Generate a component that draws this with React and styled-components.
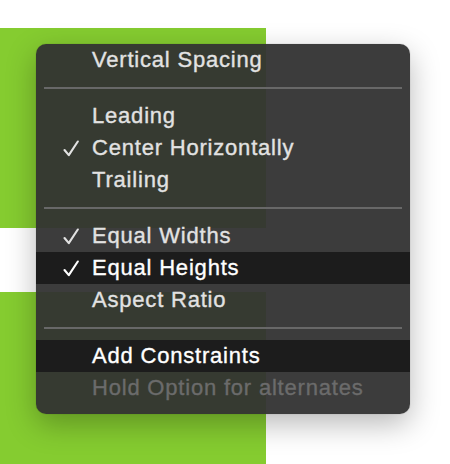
import React from 'react';
import styled, { createGlobalStyle } from 'styled-components';

const Global = createGlobalStyle`
  html, body {
    margin: 0;
    padding: 0;
    background: #fff;
  }
  body {
    font-family: "Liberation Sans", Arial, sans-serif;
  }
`;

const Stage = styled.div`
  position: relative;
  width: 450px;
  height: 464px;
  overflow: hidden;
  padding-top: 28px;
  box-sizing: border-box;
  display: flex;
  flex-direction: column;
`;

const Block = styled.div`
  width: 266px;
  height: ${p => p.h}px;
  background: ${p => (p.white ? '#fff' : '#85cc30')};
  flex: ${p => (p.grow ? '1 1 auto' : '0 0 auto')};
`;

const Menu = styled.div`
  position: absolute;
  left: 36px;
  top: 44px;
  width: 374px;
  height: 370px;
  box-sizing: border-box;
  padding-bottom: 10px;
  border-radius: 10px;
  background: rgba(50, 50, 50, 0.95);
  box-shadow: 0 10px 30px rgba(0, 0, 0, 0.28), 0 0 1px rgba(0, 0, 0, 0.4);
  overflow: hidden;
  display: flex;
  flex-direction: column;
`;

const Item = styled.div`
  height: 32px;
  display: flex;
  align-items: center;
  font-size: 22px;
  letter-spacing: 0.8px;
  -webkit-text-stroke: 0.35px currentColor;
  color: ${p => (p.disabled ? '#6b6b6b' : p.active ? '#fff' : '#e2e2e2')};
  background: ${p => (p.active ? '#1c1c1c' : 'transparent')};
`;

const Check = styled.span`
  width: 56px;
  padding-left: 27px;
  box-sizing: border-box;
  flex: 0 0 auto;
  display: flex;
  align-items: center;
  svg {
    display: block;
  }
`;

const Separator = styled.div`
  height: 24px;
  display: flex;
  align-items: center;
  padding: 0 8px;
  &::after {
    content: '';
    flex: 1;
    height: 2px;
    background: #686868;
  }
`;

const Tick = () => (
  <svg width="16" height="17" viewBox="0 0 16 17">
    <path
      d="M1.5 10 L5.8 15.2 L14.8 1.5"
      fill="none"
      stroke="currentColor"
      strokeWidth="2.1"
      strokeLinecap="round"
      strokeLinejoin="round"
    />
  </svg>
);

const Row = ({ checked, active, disabled, children }) => (
  <Item active={active} disabled={disabled}>
    <Check>{checked ? <Tick /> : null}</Check>
    {children}
  </Item>
);

export default function App() {
  return (
    <>
      <Global />
      <Stage>
        <Block h={200} />
        <Block h={64} white />
        <Block grow />
        <Menu>
          <Row>Vertical Spacing</Row>
          <Separator />
          <Row>Leading</Row>
          <Row checked>Center Horizontally</Row>
          <Row>Trailing</Row>
          <Separator />
          <Row checked>Equal Widths</Row>
          <Row checked active>Equal Heights</Row>
          <Row>Aspect Ratio</Row>
          <Separator />
          <Row active>Add Constraints</Row>
          <Row disabled>Hold Option for alternates</Row>
        </Menu>
      </Stage>
    </>
  );
}
